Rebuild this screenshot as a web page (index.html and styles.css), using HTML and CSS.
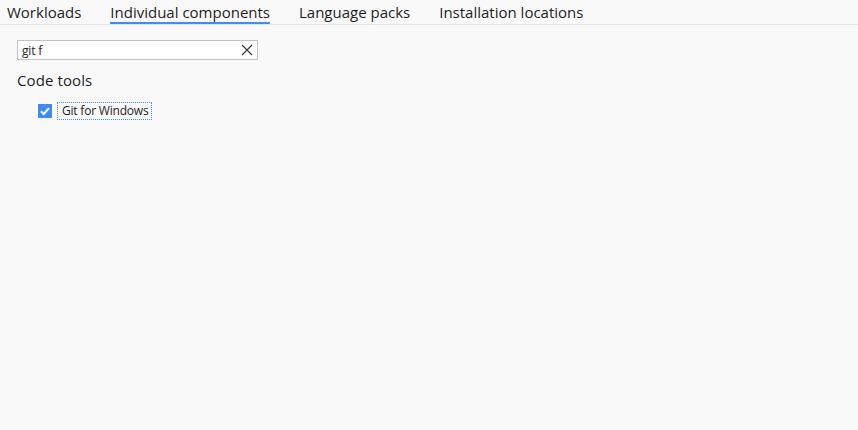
FILE: index.html
```html
<!DOCTYPE html>
<html>
<head>
<meta charset="utf-8">
<link rel="stylesheet" href="styles.css">
</head>
<body>
<div class="tabs">
  <div class="tab">Workloads</div>
  <div class="tab active">Individual components</div>
  <div class="tab">Language packs</div>
  <div class="tab">Installation locations</div>
</div>
<div class="content">
  <div class="search">
    <span class="query">git f</span>
    <svg class="clear" width="12" height="12" viewBox="0 0 12 12"><path d="M1 1L11 11M11 1L1 11" stroke="#333" stroke-width="1.1" fill="none"/></svg>
  </div>
  <div class="group">Code tools</div>
  <div class="item">
    <span class="check"><svg width="14" height="14" viewBox="0 0 14 14"><path d="M3 7.2L5.8 10L11 4.2" stroke="#fff" stroke-width="2" fill="none"/></svg></span>
    <span class="label">Git for Windows</span>
  </div>
</div>
</body>
</html>
```
FILE: styles.css
```css
html, body {
  margin: 0;
  padding: 0;
  background: #f9f9f9;
  font-family: "Open Sans", "Noto Sans", sans-serif;
  color: #1e1e1e;
  height: 100%;
}
.tabs {
  display: flex;
  height: 24px;
  border-bottom: 1px solid #e3e3e3;
  padding-left: 7px;
  gap: 29px;
}
.tab {
  font-size: 15px;
  line-height: 22px;
  padding-top: 1px;
  height: 24px;
  box-sizing: border-box;
}
.tab.active {
  border-bottom: 2px solid #3c8ff0;
}
.content {
  padding: 15px 17px 0 17px;
}
.search {
  width: 241px;
  height: 20px;
  box-sizing: border-box;
  border: 1px solid #c2c2c2;
  background: #fff;
  display: flex;
  align-items: center;
  justify-content: space-between;
  padding: 0 4px 0 4px;
}
.query {
  font-size: 12px;
  letter-spacing: -0.2px;
}
.clear {
  display: block;
}
.group {
  font-size: 15px;
  margin-top: 10px;
  line-height: 20px;
  letter-spacing: 0.1px;
}
.item {
  display: flex;
  align-items: center;
  margin-top: 12px;
  padding-left: 21px;
}
.check {
  width: 14px;
  height: 14px;
  background: #3d8cf2;
  display: flex;
  align-items: center;
  justify-content: center;
}
.label {
  margin-left: 5px;
  font-size: 12px;
  border: 1px dotted #3c8ff0;
  padding: 0 3px 0 4px;
  line-height: 16px;
  letter-spacing: -0.2px;
}
```
